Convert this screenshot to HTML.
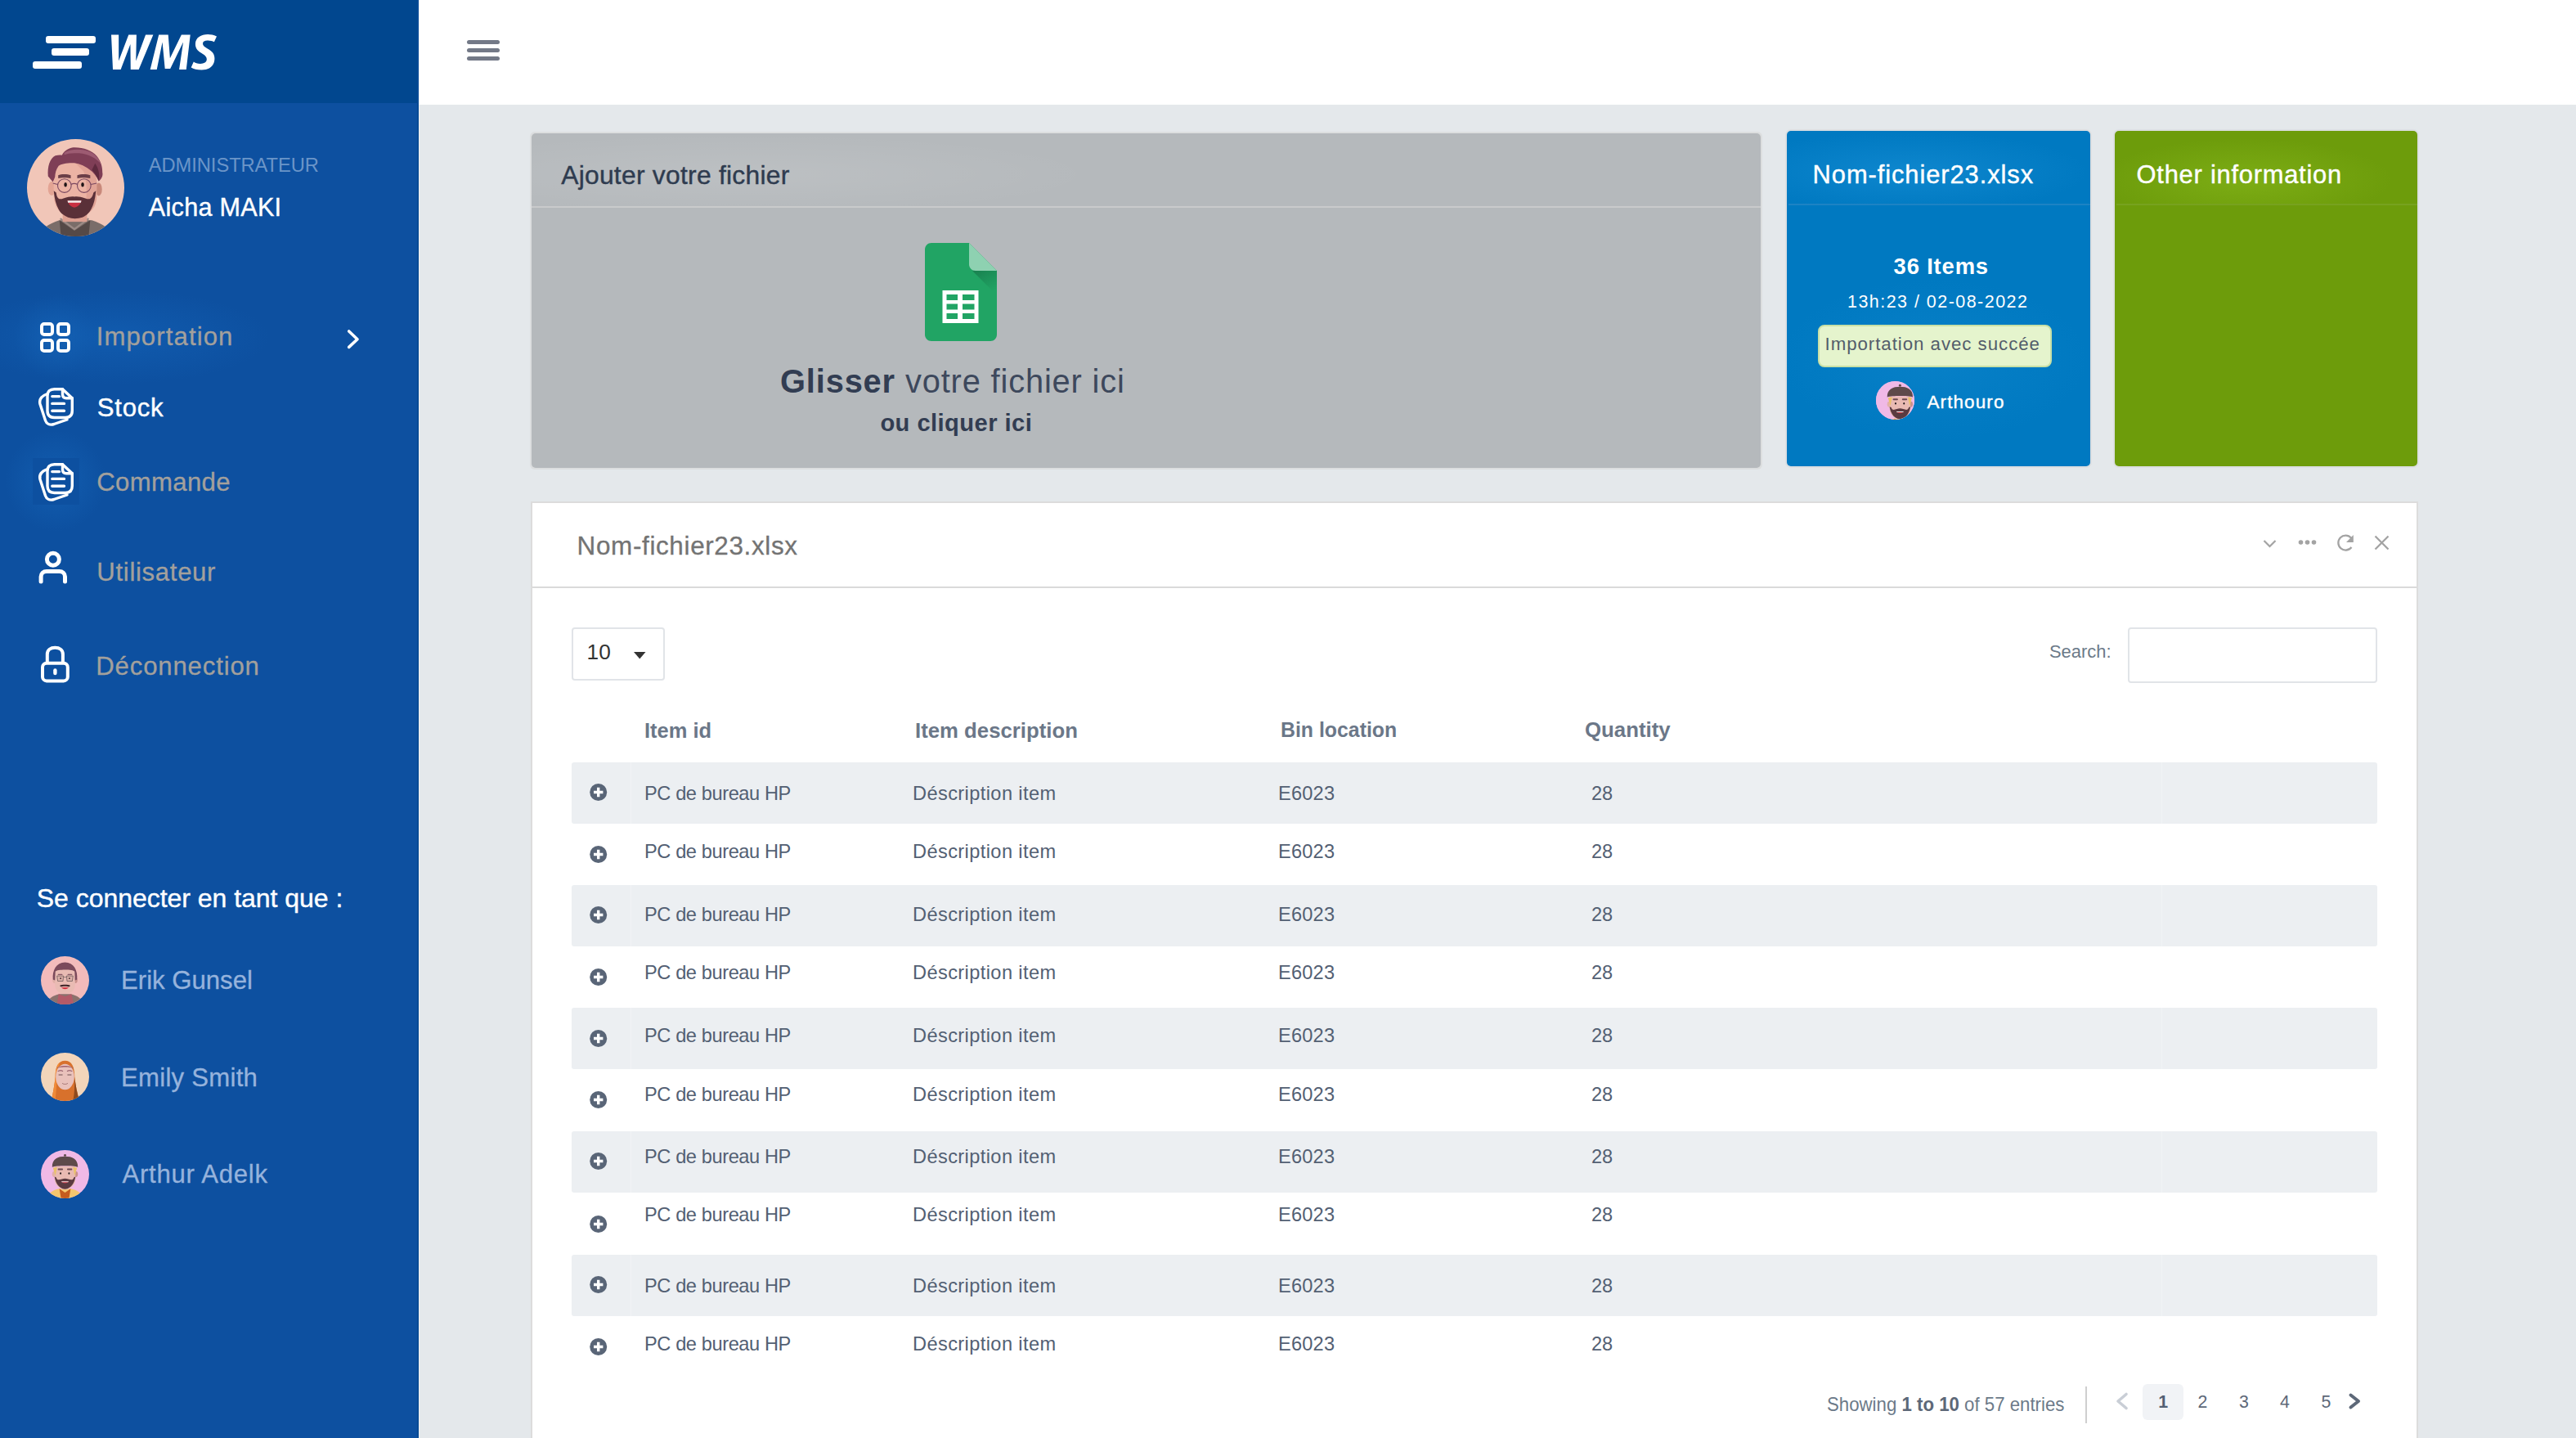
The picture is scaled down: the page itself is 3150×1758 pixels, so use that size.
<!DOCTYPE html>
<html><head><meta charset="utf-8">
<style>
*{margin:0;padding:0;box-sizing:border-box}
html,body{width:3150px;height:1758px;overflow:hidden}
body{position:relative;background:#e4e8eb;font-family:"Liberation Sans",sans-serif}
.a{position:absolute}
.t{position:absolute;line-height:1;white-space:nowrap}
#side{left:0;top:0;width:512px;height:1758px;background:#0d50a0}
#sidehead{left:0;top:0;width:512px;height:126px;background:#01478f}
#topbar{left:512px;top:0;width:2638px;height:128px;background:#fff}
.card{position:absolute;border-radius:5px}
</style></head>
<body>

<svg width="0" height="0" style="position:absolute">
<defs>
<clipPath id="cc"><circle cx="60" cy="60" r="60"/></clipPath>
<symbol id="av1" viewBox="0 0 120 120">
 <g clip-path="url(#cc)">
  <rect width="120" height="120" fill="#f1c6b8"/>
  <path d="M14 120 C18 110 26 105 40 100 L80 100 C94 105 102 110 106 120 Z" fill="#7a6d69"/>
  <path d="M40 100 L58.5 113 L78 100 L76 120 L42 120 Z" fill="#554947"/>
  <path d="M41 98 L58.5 111 L76 98" fill="none" stroke="#9c8b86" stroke-width="2.2"/>
  <rect x="44" y="86" width="30" height="16" fill="#dd9f91"/>
  <ellipse cx="30.5" cy="61" rx="4.6" ry="8.5" fill="#e3a494"/>
  <ellipse cx="88.5" cy="62" rx="4" ry="8" fill="#c9897b"/>
  <path d="M33 42 C33 32 44 28 58.5 28 C74 28 86 34 86 46 L86 70 C86 86 76 96 59 96 C43 96 33 86 33 70 Z" fill="#ecb3a4"/>
  <path d="M60 30 C72 30 84 38 86 50 L86 70 C86 84 78 92 66 95 C74 84 76 60 70 40 Z" fill="#d9968a" opacity=".55"/>
  <path d="M33 63.7 C34 76 37 86 43 92 C48 96 53 98 59 98 C66 98 71 96 75 92 C81 86 84 76 85 63.7 L82 66 C80 74 77 75 72 73 C66 71 62 70.5 58.5 71 C55 70.5 51 71 45 73 C40 75 37 74 36 66 Z" fill="#5a3038"/>
  <path d="M49.7 76 C52 83 57 84.5 58.5 84.5 C60 84.5 65 83 67.3 76 Z" fill="#c92f42"/>
  <path d="M50 76 L67 76 L66.5 78.3 L50.5 78.3 Z" fill="#f1eeee"/>
  <path d="M26 46 C25 34 28 24 35 20.5 C38 19.5 41 19.5 43 19.8 C47 13 53 10.4 59 10.4 C70 10.4 80 14 86 21 C91 27 93 34 93 41 C94 45 92 49 88.5 52 C86 46 82 41 77 37.5 C70 32 62 29.5 56 29.5 C48 29.5 42 31 39 33 C36 37 34.7 42 34.5 47 L32 53 Z" fill="#7f3e56"/>
  <path d="M46 17 C53 12 66 11.5 76 15 C84 18 89 24 91 31 C86 24 76 18.5 64 17.5 C56 17 50 17.5 46 19.5 Z" fill="#9d5b72"/>
  <path d="M84 30 C88 36 90 42 88.5 52 C86 46 84 42 80 38 Z" fill="#5e2a3e"/>
  <path d="M38.5 44.5 C42 43 50 43 54 44.5 L54 48.5 C50 47.5 42 47.5 38.5 48.5 Z" fill="#6b3f48"/>
  <path d="M62 44.5 C66 43 74 43 78 44.5 L78 48.5 C74 47.5 66 47.5 62 48.5 Z" fill="#6b3f48"/>
  <circle cx="46.2" cy="57.5" r="8.4" fill="none" stroke="#7a4860" stroke-width="1.1"/>
  <circle cx="70.4" cy="57.5" r="8.4" fill="none" stroke="#7a4860" stroke-width="1.1"/>
  <path d="M54.6 56 C56.5 54.5 60 54.5 62 56 M37.8 56 L32 54.5 M78.8 56 L86 54.5" fill="none" stroke="#7a4860" stroke-width="1.1"/>
  <ellipse cx="47.5" cy="56.2" rx="1.8" ry="2.8" fill="#1d1416"/>
  <ellipse cx="68.6" cy="56.2" rx="1.8" ry="2.8" fill="#1d1416"/>
 </g>
</symbol>
<symbol id="av2" viewBox="0 0 120 120">
 <g clip-path="url(#cc)">
  <rect width="120" height="120" fill="#f2bbbb"/>
  <path d="M14 120 C18 104 30 98 46 94 L74 94 C90 98 102 104 106 120 Z" fill="#8c716d"/>
  <path d="M44 94 L60 100 L76 94 L82 120 L40 120 Z" fill="#b35a68"/>
  <ellipse cx="34" cy="60" rx="5" ry="7" fill="#e2b0a8"/>
  <ellipse cx="86" cy="60" rx="5" ry="7" fill="#c9908a"/>
  <path d="M35 36 C35 26 46 24 60 24 C74 24 85 26 85 36 L85 70 C85 84 76 93 60 93 C44 93 35 84 35 70 Z" fill="#e9bbb3"/>
  <path d="M30 58 C28 34 38 16 60 15 C82 16 92 34 90 58 L85 60 L84 38 C80 32 40 32 36 38 L35 60 Z" fill="#7b4a5b"/>
  <path d="M40 49 L56 49 L55 62 L42 62 Z M64 49 L80 49 L78 62 L65 62 Z" fill="#c9a09a" fill-opacity=".45" stroke="#6e5a5a" stroke-width="1.6"/>
  <path d="M56 52 L64 52" stroke="#6e5a5a" stroke-width="1.4"/>
  <rect x="42" y="44" width="12" height="3" rx="1.5" fill="#8a5a66"/>
  <rect x="66" y="44" width="12" height="3" rx="1.5" fill="#8a5a66"/>
  <circle cx="49" cy="55" r="1.8" fill="#2a1a1c"/><circle cx="71" cy="55" r="1.8" fill="#2a1a1c"/>
  <path d="M47 73 C52 70 68 70 73 73 L71 76 C66 74 54 74 49 76 Z" fill="#3e2428"/>
  <path d="M51 78 C55 83 65 83 69 78 Z" fill="#d02a3a"/>
 </g>
</symbol>
<symbol id="av3" viewBox="0 0 120 120">
 <g clip-path="url(#cc)">
  <rect width="120" height="120" fill="#f3d5ba"/>
  <path d="M26 120 C30 100 34 80 36 60 C36 34 44 20 60 20 C76 20 84 34 84 60 C86 80 90 100 96 120 Z" fill="#d8712c"/>
  <path d="M26 120 C30 100 34 80 36 60 C36 40 40 28 48 24 C40 40 40 80 36 120 Z" fill="#f08a38"/>
  <path d="M84 60 C86 80 90 100 96 120 L80 120 C84 100 84 80 84 60 Z" fill="#8e4a1e"/>
  <ellipse cx="60" cy="60" rx="23" ry="32" fill="#e9c1bb"/>
  <path d="M38 40 C44 30 76 30 82 40 C76 34 44 34 38 40 Z" fill="#a0606a"/>
  <path d="M42 46 C46 44 52 44 55 46 M65 46 C68 44 74 44 78 46" stroke="#8a5060" stroke-width="2.2" fill="none"/>
  <path d="M44 55 L54 55 M66 55 L76 55" stroke="#4a3236" stroke-width="1.6"/>
  <path d="M53 76 C57 79 63 79 67 76" stroke="#8a5a5a" stroke-width="1.4" fill="none"/>
 </g>
</symbol>
<symbol id="av4" viewBox="0 0 120 120">
 <g clip-path="url(#cc)">
  <rect width="120" height="120" fill="#f0b9e6"/>
  <path d="M16 120 C20 104 32 99 46 96 L74 96 C88 99 100 104 104 120 Z" fill="#f5c66e"/>
  <path d="M46 96 L60 106 L74 96 L70 120 L50 120 Z" fill="#c65c1e"/>
  <rect x="50" y="86" width="20" height="12" fill="#e8b7ad"/>
  <ellipse cx="33" cy="60" rx="5" ry="7" fill="#e2b0a8"/>
  <ellipse cx="87" cy="60" rx="5" ry="7" fill="#c9908a"/>
  <path d="M34 40 L86 40 L86 70 C86 86 76 96 60 96 C44 96 34 86 34 70 Z" fill="#e9bab2"/>
  <path d="M30 44 L40 42 L36 64 Z M90 44 L80 42 L84 64 Z" fill="#eac26a"/>
  <path d="M34 66 C36 80 44 96 60 97 C76 96 84 80 86 66 L82 68 C80 76 74 74 68 72 C62 70 58 70 52 72 C46 74 40 76 38 68 Z" fill="#5b3a40"/>
  <path d="M51 78 C55 84 65 84 69 78 Z" fill="#c9323f"/>
  <path d="M51 78 L69 78 L68 80 L52 80 Z" fill="#eee"/>
  <path d="M28 42 C28 22 42 16 60 16 C78 16 92 22 92 42 C80 38 40 38 28 42 Z" fill="#5e4a4a"/>
  <circle cx="60" cy="13" r="3" fill="#5e4a4a"/>
  <rect x="42" y="46" width="13" height="4" rx="2" fill="#6e4a52"/>
  <rect x="65" y="46" width="13" height="4" rx="2" fill="#6e4a52"/>
  <ellipse cx="49" cy="58" rx="1.8" ry="2.6" fill="#1d1416"/>
  <ellipse cx="70" cy="58" rx="1.8" ry="2.6" fill="#1d1416"/>
 </g>
</symbol>
<symbol id="av5" viewBox="0 0 120 120">
 <g clip-path="url(#cc)"><rect width="120" height="120" fill="#f0b9e6"/><g transform="translate(0,-3) scale(1.25)">
  <rect width="120" height="120" fill="#f0b9e6"/>
  <path d="M16 120 C20 104 32 99 46 96 L74 96 C88 99 100 104 104 120 Z" fill="#f5c66e"/>
  <path d="M46 96 L60 106 L74 96 L70 120 L50 120 Z" fill="#c65c1e"/>
  <rect x="50" y="86" width="20" height="12" fill="#e8b7ad"/>
  <ellipse cx="33" cy="60" rx="5" ry="7" fill="#e2b0a8"/>
  <ellipse cx="87" cy="60" rx="5" ry="7" fill="#c9908a"/>
  <path d="M34 40 L86 40 L86 70 C86 86 76 96 60 96 C44 96 34 86 34 70 Z" fill="#e9bab2"/>
  <path d="M30 44 L40 42 L36 64 Z M90 44 L80 42 L84 64 Z" fill="#eac26a"/>
  <path d="M34 66 C36 80 44 96 60 97 C76 96 84 80 86 66 L82 68 C80 76 74 74 68 72 C62 70 58 70 52 72 C46 74 40 76 38 68 Z" fill="#5b3a40"/>
  <path d="M51 78 C55 84 65 84 69 78 Z" fill="#c9323f"/>
  <path d="M51 78 L69 78 L68 80 L52 80 Z" fill="#eee"/>
  <path d="M28 42 C28 22 42 16 60 16 C78 16 92 22 92 42 C80 38 40 38 28 42 Z" fill="#5e4a4a"/>
  <circle cx="60" cy="13" r="3" fill="#5e4a4a"/>
  <rect x="42" y="46" width="13" height="4" rx="2" fill="#6e4a52"/>
  <rect x="65" y="46" width="13" height="4" rx="2" fill="#6e4a52"/>
  <ellipse cx="49" cy="58" rx="1.8" ry="2.6" fill="#1d1416"/>
  <ellipse cx="70" cy="58" rx="1.8" ry="2.6" fill="#1d1416"/>
 </g></g>
</symbol>

<symbol id="docs" viewBox="0 0 64 60">
 <g fill="none" stroke="#fff" stroke-width="3.4" stroke-linecap="round" stroke-linejoin="round">
  <path d="M20 16.5 C13 19 9.5 23 11 29 L17.5 49 C19 53.5 23 55 28 53.5 L44 48"/>
  <path d="M28.5 10.7 L38.5 10.7 L50.3 21.7 L50.3 37 C50.3 43 47 45.5 42 45.5 L28.5 45.5 C23 45.5 20 42.5 20 37 L20 19 C20 13.5 23 10.7 28.5 10.7 Z"/>
  <path d="M38.5 10.7 L38.5 17 C38.5 20 40 21.7 43 21.7 L50.3 21.7"/>
  <path d="M25.8 19.6 L34.5 19.6 M25.8 28.4 L40.5 28.4 M25.8 37.3 L40.5 37.3"/>
 </g>
</symbol>
</defs></svg>
<div id="side" class="a"></div>
<div id="sidehead" class="a"></div>
<div class="a" style="left:510px;top:0;width:2px;height:1758px;background:#054a94"></div>
<div id="topbar" class="a"></div>
<div class="a" style="left:512px;top:128px;width:1px;height:1630px;background:#eef0f1"></div>

<!-- logo -->
<div class="a" style="left:56px;top:44px;width:61px;height:9px;border-radius:3px;background:#fff"></div>
<div class="a" style="left:63px;top:59px;width:46px;height:9px;border-radius:3px;background:#fff"></div>
<div class="a" style="left:40px;top:75px;width:60px;height:9px;border-radius:3px;background:#fff"></div>
<svg class="a" style="left:0;top:0" width="300" height="110" viewBox="0 0 300 110"><g fill="#fff">
<path d="M136.02 42.42 L145.16 42.42 L145.16 74.41 L157.27 42.42 L166.89 42.42 L166.27 74.41 L178.07 42.42 L187.39 42.42 L169.69 84.97 L159.75 84.97 L159.44 53.91 L147.64 84.97 L138.01 84.97 Z"/>
<path d="M183.66 84.97 L194.22 42.42 L205.71 42.42 L207.89 71.30 L221.86 42.42 L232.73 42.42 L227.76 84.97 L219.07 84.97 L224.04 51.43 L208.20 84.04 L201.68 84.04 L198.57 51.43 L191.74 84.97 Z"/>
<path d="M265.0 44.6 C261 42.8 258 42.1 254 42.1 C246 42.1 238.9 46 238.9 54 C238.9 60 243 63 248 66 C251.5 68.2 252.8 70 252.8 72.6 C252.8 76 249.5 77.9 245 77.9 C241.5 77.9 238.5 76.8 236.8 75.4 L233.7 82.5 C236.5 84.2 241 85.6 246.5 85.6 C256 85.6 262.4 80.5 262.4 71.5 C262.4 65.5 259 62.3 253 58.9 C249.5 56.9 248 55.6 248 53.2 C248 50.8 250.2 49.5 253.7 49.5 C257 49.5 259.8 50.4 261.9 51.2 Z"/>
</g></svg>


<!-- profile -->
<svg class="a" style="left:33px;top:170px" width="119" height="119"><use href="#av1"/></svg>
<div class="t" id="admin" style="left:181.80px;top:190.98px;font-size:23.68px;letter-spacing:-0.042px;color:#6b95c8">ADMINISTRATEUR</div>
<div class="t" id="aicha" style="left:181.80px;top:238.33px;font-size:30.56px;letter-spacing:0.300px;color:#fff;-webkit-text-stroke:0.4px currentColor">Aicha MAKI</div>

<!-- menu glow -->
<div class="a" style="left:0;top:340px;width:330px;height:145px;background:radial-gradient(ellipse 190px 58px at 140px 72px,rgba(25,115,205,.32),rgba(25,115,205,0))"></div>
<div class="a" style="left:0;top:352px;width:140px;height:120px;background:radial-gradient(circle at 67px 60px,rgba(30,120,205,.25),rgba(30,120,205,0) 50px)"></div>
<div class="a" style="left:0;top:518px;width:140px;height:140px;background:radial-gradient(circle at 68px 70px,rgba(25,110,195,.45),rgba(25,110,195,0) 62px)"></div>
<div class="a" style="left:40px;top:560px;width:57px;height:57px;background:#0d50a0"></div>

<!-- importation -->
<div class="a" style="left:49px;top:394px;width:17px;height:17px;border:4px solid #fff;border-radius:5px"></div>
<div class="a" style="left:69px;top:394px;width:17px;height:17px;border:4px solid #fff;border-radius:5px"></div>
<div class="a" style="left:49px;top:414px;width:17px;height:17px;border:4px solid #fff;border-radius:5px"></div>
<div class="a" style="left:69px;top:414px;width:17px;height:17px;border:4px solid #fff;border-radius:5px"></div>
<div class="t" id="m_imp" style="left:117.70px;top:396.43px;font-size:31.13px;letter-spacing:1.100px;color:#a3a09c;-webkit-text-stroke:0.3px currentColor">Importation</div>
<svg class="a" style="left:420px;top:398px" width="24" height="34"><path d="M6.7 7 L17 16.7 L6.7 26.4" fill="none" stroke="#fff" stroke-width="3.6" stroke-linecap="round" stroke-linejoin="round"/></svg>

<!-- stock -->
<svg class="a" style="left:38px;top:465px" width="64" height="60"><use href="#docs"/></svg>
<div class="t" id="m_stock" style="left:118.80px;top:483.43px;font-size:31.13px;letter-spacing:0.750px;color:#fff;-webkit-text-stroke:0.4px currentColor">Stock</div>
<!-- commande -->
<svg class="a" style="left:38px;top:557px" width="64" height="60"><use href="#docs"/></svg>
<div class="t" id="m_cmd" style="left:118.30px;top:573.53px;font-size:31.13px;letter-spacing:0.328px;color:#a3a09c;-webkit-text-stroke:0.3px currentColor">Commande</div>
<!-- utilisateur -->
<svg class="a" style="left:40px;top:665px" width="60" height="60">
 <g fill="none" stroke="#fff" stroke-width="5" stroke-linecap="round">
  <circle cx="24.9" cy="18.8" r="7.5"/>
  <path d="M10.1 45.9 L10.1 40 C10.1 36 13 33.5 17 33.5 L32.5 33.5 C36.5 33.5 39.5 36 39.5 40 L39.5 45.9"/>
 </g>
</svg>
<div class="t" id="m_user" style="left:118.30px;top:684.13px;font-size:31.13px;color:#a3a09c;letter-spacing:0.680px;-webkit-text-stroke:0.3px currentColor">Utilisateur</div>
<!-- deconnection -->
<svg class="a" style="left:40px;top:780px" width="60" height="60">
 <g fill="none" stroke="#fff" stroke-width="4">
  <path d="M17.8 30 L17.8 20 C17.8 14.5 22 11.8 27.3 11.8 C32.6 11.8 36.9 14.5 36.9 20 L36.9 30"/>
  <rect x="12" y="30.8" width="30.8" height="21.6" rx="5"/>
 </g>
 <rect x="25.2" y="37.3" width="4.4" height="8" rx="2.2" fill="#fff"/>
</svg>
<div class="t" id="m_dec" style="left:117.30px;top:799.03px;font-size:31.13px;color:#a3a09c;letter-spacing:0.837px;-webkit-text-stroke:0.3px currentColor">Déconnection</div>

<div class="t" id="seco" style="left:44.80px;top:1082.30px;font-size:32px;color:#fff;letter-spacing:-0.032px;-webkit-text-stroke:0.4px currentColor">Se connecter en tant que :</div>
<svg class="a" style="left:50px;top:1169px" width="59" height="59"><use href="#av2"/></svg>
<div class="t" id="u1" style="left:148.00px;top:1183.03px;font-size:31.13px;letter-spacing:0.000px;color:#96b3dc;-webkit-text-stroke:0.3px currentColor">Erik Gunsel</div>
<svg class="a" style="left:50px;top:1287px" width="59" height="59"><use href="#av3"/></svg>
<div class="t" id="u2" style="left:148.00px;top:1301.53px;font-size:31.13px;letter-spacing:0.260px;color:#96b3dc;-webkit-text-stroke:0.3px currentColor">Emily Smith</div>
<svg class="a" style="left:50px;top:1406px" width="59" height="59"><use href="#av4"/></svg>
<div class="t" id="u3" style="left:149.50px;top:1420.43px;font-size:31.13px;color:#96b3dc;letter-spacing:0.728px;-webkit-text-stroke:0.3px currentColor">Arthur Adelk</div>


<!-- upload card -->
<div class="a" style="left:648px;top:161px;width:1507px;height:413px;border-radius:6px;background:#dcdedf"></div>
<div class="a" style="left:650px;top:163px;width:1503px;height:409px;border-radius:5px;background:#b5b9bc;overflow:hidden">
  <div class="a" style="left:0;top:0;width:700px;height:90px;background:radial-gradient(ellipse at 260px 50px,rgba(255,255,255,.10),rgba(255,255,255,0) 70%)"></div>
</div>
<div class="a" style="left:650px;top:252px;width:1503px;height:2px;background:#c9cacb"></div>
<div class="t" id="ajout" style="left:686.20px;top:199.34px;font-size:31.80px;letter-spacing:0.260px;color:#2e3b4f;-webkit-text-stroke:0.4px currentColor">Ajouter votre fichier</div>
<svg class="a" style="left:1131px;top:297px" width="88" height="120" viewBox="0 0 88 120">
  <path d="M8 0 L54 0 L88 34 L88 112 C88 116.5 84.5 120 80 120 L8 120 C3.5 120 0 116.5 0 112 L0 8 C0 3.5 3.5 0 8 0 Z" fill="#21a464"/>
  <path d="M54 0 L88 34 L62 34 C57.5 34 54 30.5 54 26 Z" fill="#8ed1b1"/>
  <defs><linearGradient id="fg" x1="0" y1="0" x2="0.6" y2="1"><stop offset="0" stop-color="#177a4b" stop-opacity=".85"/><stop offset="1" stop-color="#177a4b" stop-opacity="0"/></linearGradient></defs><path d="M58 34 L88 34 L88 64 Z" fill="url(#fg)"/>
  <rect x="21.5" y="58" width="44" height="40" fill="#fff"/>
  <rect x="26.5" y="63" width="13.5" height="7" fill="#21a464"/>
  <rect x="46" y="63" width="14.5" height="7" fill="#21a464"/>
  <rect x="26.5" y="74.5" width="13.5" height="7" fill="#21a464"/>
  <rect x="46" y="74.5" width="14.5" height="7" fill="#21a464"/>
  <rect x="26.5" y="86" width="13.5" height="7" fill="#21a464"/>
  <rect x="46" y="86" width="14.5" height="7" fill="#21a464"/>
</svg>
<div class="t" id="gliss" style="left:954.00px;top:447.30px;font-size:39.82px;color:#323d52;letter-spacing:0.850px"><b>Glisser</b><span style="color:#3d485c"> votre fichier ici</span></div>
<div class="t" id="ouclic" style="left:1076.40px;top:503.22px;font-size:29.13px;letter-spacing:0.442px;font-weight:bold;color:#323d52">ou cliquer ici</div>

<!-- blue card -->
<div class="a" style="left:2183px;top:158px;width:375px;height:414px;border-radius:7px;background:#dcdfe2"></div>
<div class="a" style="left:2185px;top:160px;width:371px;height:410px;border-radius:5px;background:#0079c1;overflow:hidden">
  <div class="a" style="left:0;top:0;width:371px;height:90px;background:radial-gradient(ellipse at 150px 50px,rgba(40,160,230,.35),rgba(40,160,230,0) 70%)"></div>
  <div class="a" style="left:0;top:180px;width:371px;height:200px;background:radial-gradient(ellipse at 180px 100px,rgba(30,150,220,.25),rgba(30,150,220,0) 70%)"></div>
</div>
<div class="a" style="left:2187px;top:249px;width:369px;height:2px;background:#1d83c4"></div>
<div class="t" id="bc_title" style="left:2216.60px;top:198.89px;font-size:30.85px;letter-spacing:0.932px;color:#fff;-webkit-text-stroke:0.4px currentColor">Nom-fichier23.xlsx</div>
<div class="t" id="bc_items" style="left:2315.60px;top:311.8px;font-size:27.41px;font-weight:bold;color:#fff;letter-spacing:0.829px">36 Items</div>
<div class="t" id="bc_date" style="left:2259.00px;top:359.28px;font-size:21.49px;letter-spacing:1.467px;color:#fff">13h:23 / 02-08-2022</div>
<div class="a" style="left:2223px;top:397px;width:286px;height:52px;border-radius:8px;background:#e5f4cd;border:2px solid #c8e0a6"></div>
<div class="t" id="bc_badge" style="left:2231.5px;top:410.33px;font-size:22.28px;letter-spacing:0.96px;color:#535d6b">Importation avec succée</div>
<svg class="a" style="left:2294px;top:466px" width="47" height="47"><use href="#av5"/></svg>
<div class="t" id="bc_user" style="left:2356.50px;top:480.51px;font-size:22.45px;letter-spacing:1.114px;color:#fff;-webkit-text-stroke:0.4px currentColor">Arthouro</div>

<!-- green card -->
<div class="a" style="left:2584px;top:158px;width:374px;height:414px;border-radius:7px;background:#dcdfe2"></div>
<div class="a" style="left:2586px;top:160px;width:370px;height:410px;border-radius:5px;background:#6d9c0b;overflow:hidden">
  <div class="a" style="left:0;top:0;width:370px;height:90px;background:radial-gradient(ellipse at 160px 60px,rgba(140,190,30,.5),rgba(140,190,30,0) 60%)"></div>
</div>
<div class="a" style="left:2588px;top:249px;width:368px;height:2px;background:#77a21f"></div>
<div class="t" id="gc_title" style="left:2612.60px;top:198.89px;font-size:30.85px;letter-spacing:0.763px;color:#fff;-webkit-text-stroke:0.4px currentColor">Other information</div>

<!-- table card -->
<div class="a" style="left:649px;top:613px;width:2308px;height:1200px;background:#fff;border:2px solid #dcdcdc"></div>
<div class="a" style="left:651px;top:717px;width:2304px;height:2px;background:#dadada"></div>
<div class="t" id="tc_title" style="left:705.60px;top:651.64px;font-size:31.42px;color:#737373;letter-spacing:0.658px;-webkit-text-stroke:0.3px currentColor">Nom-fichier23.xlsx</div>


<!-- card header icons -->
<svg class="a" style="left:2760px;top:645px" width="170" height="40" viewBox="2760 645 170 40">
  <path d="M2768.5 661 L2775.5 668 L2782.5 661" fill="none" stroke="#a3a3a3" stroke-width="2.2"/>
  <circle cx="2813.5" cy="663" r="2.8" fill="#a3a3a3"/><circle cx="2821.5" cy="663" r="2.8" fill="#a3a3a3"/><circle cx="2829.5" cy="663" r="2.8" fill="#a3a3a3"/>
  <path d="M2875.5 669 A9 9 0 1 1 2875 657.5" fill="none" stroke="#a3a3a3" stroke-width="2.3"/>
  <path d="M2877.8 654 L2877.8 663 L2869 663 Z" fill="#a3a3a3"/>
  <path d="M2904.5 655.5 L2920.5 671.5 M2920.5 655.5 L2904.5 671.5" stroke="#a3a3a3" stroke-width="2.3"/>
</svg>

<!-- length select -->
<div class="a" style="left:699px;top:767px;width:114px;height:65px;border:2px solid #e1e4e8;border-radius:4px;background:#fff"></div>
<div class="t" id="len10" style="left:717.40px;top:783.70px;font-size:26.26px;color:#333;letter-spacing:0.2px">10</div>
<svg class="a" style="left:775px;top:797px" width="15" height="9"><path d="M0 0 L14.5 0 L7.25 8.5 Z" fill="#333"/></svg>

<!-- search -->
<div class="t" id="search" style="left:2506.40px;top:784.97px;font-size:22.73px;color:#6c7a89;transform-origin:0 0;transform:scaleX(0.9648)">Search:</div>
<div class="a" style="left:2602px;top:767px;width:305px;height:68px;border:2px solid #e1e4e8;border-radius:4px;background:#fff"></div>

<!-- header -->
<div class="t" id="h1" style="left:788.40px;top:879.90px;font-size:26.26px;font-weight:bold;color:#6b7788;transform-origin:0 0;transform:scaleX(0.9697)">Item id</div>
<div class="t" id="h2" style="left:1118.60px;top:879.90px;font-size:26.26px;font-weight:bold;color:#6b7788;transform-origin:0 0;transform:scaleX(0.9808)">Item description</div>
<div class="t" id="h3" style="left:1565.80px;top:879.30px;font-size:26.26px;font-weight:bold;color:#6b7788;transform-origin:0 0;transform:scaleX(0.9467)">Bin location</div>
<div class="t" id="h4" style="left:1938.20px;top:879.30px;font-size:26.26px;font-weight:bold;color:#6b7788;transform-origin:0 0;transform:scaleX(0.9821)">Quantity</div>
<div class="a" style="left:699px;top:931.5px;width:2208px;height:75px;border-radius:3px;background:#eceff2"></div>
<div class="a" style="left:699px;top:1082.2px;width:2208px;height:75px;border-radius:3px;background:#eceff2"></div>
<div class="a" style="left:699px;top:1232.3px;width:2208px;height:75px;border-radius:3px;background:#eceff2"></div>
<div class="a" style="left:699px;top:1382.7px;width:2208px;height:75px;border-radius:3px;background:#eceff2"></div>
<div class="a" style="left:699px;top:1534.0px;width:2208px;height:75px;border-radius:3px;background:#eceff2"></div>
<div class="a" style="left:771px;top:931.5px;width:1px;height:75px;background:#f1f3f5"></div>
<div class="a" style="left:771px;top:1082.2px;width:1px;height:75px;background:#f1f3f5"></div>
<div class="a" style="left:771px;top:1232.3px;width:1px;height:75px;background:#f1f3f5"></div>
<div class="a" style="left:771px;top:1382.7px;width:1px;height:75px;background:#f1f3f5"></div>
<div class="a" style="left:771px;top:1534.0px;width:1px;height:75px;background:#f1f3f5"></div>
<div class="a" style="left:2643px;top:931.5px;width:1px;height:75px;background:#f1f3f5"></div>
<div class="a" style="left:2643px;top:1082.2px;width:1px;height:75px;background:#f1f3f5"></div>
<div class="a" style="left:2643px;top:1232.3px;width:1px;height:75px;background:#f1f3f5"></div>
<div class="a" style="left:2643px;top:1382.7px;width:1px;height:75px;background:#f1f3f5"></div>
<div class="a" style="left:2643px;top:1534.0px;width:1px;height:75px;background:#f1f3f5"></div>
<svg class="a" style="left:721px;top:958.4px" width="22" height="22" viewBox="0 0 22 22"><circle cx="10.7" cy="10.5" r="10.5" fill="#596577"/><path d="M5 10.5 H16.4 M10.7 4.8 V16.2" stroke="#fff" stroke-width="3.4"/></svg>
<div class="t" style="left:788px;top:958.5px;font-size:23.6px;color:#536073;letter-spacing:-0.4px">PC de bureau HP</div>
<div class="t" style="left:1116px;top:958.5px;font-size:23.6px;color:#536073;letter-spacing:0.4px">Déscription item</div>
<div class="t" style="left:1563px;top:958.5px;font-size:23.6px;color:#536073;letter-spacing:0.2px">E6023</div>
<div class="t" style="left:1946px;top:958.5px;font-size:23.6px;color:#536073">28</div>
<svg class="a" style="left:721px;top:1033.6px" width="22" height="22" viewBox="0 0 22 22"><circle cx="10.7" cy="10.5" r="10.5" fill="#596577"/><path d="M5 10.5 H16.4 M10.7 4.8 V16.2" stroke="#fff" stroke-width="3.4"/></svg>
<div class="t" style="left:788px;top:1030.3px;font-size:23.6px;color:#536073;letter-spacing:-0.4px">PC de bureau HP</div>
<div class="t" style="left:1116px;top:1030.3px;font-size:23.6px;color:#536073;letter-spacing:0.4px">Déscription item</div>
<div class="t" style="left:1563px;top:1030.3px;font-size:23.6px;color:#536073;letter-spacing:0.2px">E6023</div>
<div class="t" style="left:1946px;top:1030.3px;font-size:23.6px;color:#536073">28</div>
<svg class="a" style="left:721px;top:1108.0px" width="22" height="22" viewBox="0 0 22 22"><circle cx="10.7" cy="10.5" r="10.5" fill="#596577"/><path d="M5 10.5 H16.4 M10.7 4.8 V16.2" stroke="#fff" stroke-width="3.4"/></svg>
<div class="t" style="left:788px;top:1106.5px;font-size:23.6px;color:#536073;letter-spacing:-0.4px">PC de bureau HP</div>
<div class="t" style="left:1116px;top:1106.5px;font-size:23.6px;color:#536073;letter-spacing:0.4px">Déscription item</div>
<div class="t" style="left:1563px;top:1106.5px;font-size:23.6px;color:#536073;letter-spacing:0.2px">E6023</div>
<div class="t" style="left:1946px;top:1106.5px;font-size:23.6px;color:#536073">28</div>
<svg class="a" style="left:721px;top:1183.8px" width="22" height="22" viewBox="0 0 22 22"><circle cx="10.7" cy="10.5" r="10.5" fill="#596577"/><path d="M5 10.5 H16.4 M10.7 4.8 V16.2" stroke="#fff" stroke-width="3.4"/></svg>
<div class="t" style="left:788px;top:1178.3px;font-size:23.6px;color:#536073;letter-spacing:-0.4px">PC de bureau HP</div>
<div class="t" style="left:1116px;top:1178.3px;font-size:23.6px;color:#536073;letter-spacing:0.4px">Déscription item</div>
<div class="t" style="left:1563px;top:1178.3px;font-size:23.6px;color:#536073;letter-spacing:0.2px">E6023</div>
<div class="t" style="left:1946px;top:1178.3px;font-size:23.6px;color:#536073">28</div>
<svg class="a" style="left:721px;top:1259.3px" width="22" height="22" viewBox="0 0 22 22"><circle cx="10.7" cy="10.5" r="10.5" fill="#596577"/><path d="M5 10.5 H16.4 M10.7 4.8 V16.2" stroke="#fff" stroke-width="3.4"/></svg>
<div class="t" style="left:788px;top:1254.7px;font-size:23.6px;color:#536073;letter-spacing:-0.4px">PC de bureau HP</div>
<div class="t" style="left:1116px;top:1254.7px;font-size:23.6px;color:#536073;letter-spacing:0.4px">Déscription item</div>
<div class="t" style="left:1563px;top:1254.7px;font-size:23.6px;color:#536073;letter-spacing:0.2px">E6023</div>
<div class="t" style="left:1946px;top:1254.7px;font-size:23.6px;color:#536073">28</div>
<svg class="a" style="left:721px;top:1334.0px" width="22" height="22" viewBox="0 0 22 22"><circle cx="10.7" cy="10.5" r="10.5" fill="#596577"/><path d="M5 10.5 H16.4 M10.7 4.8 V16.2" stroke="#fff" stroke-width="3.4"/></svg>
<div class="t" style="left:788px;top:1326.5px;font-size:23.6px;color:#536073;letter-spacing:-0.4px">PC de bureau HP</div>
<div class="t" style="left:1116px;top:1326.5px;font-size:23.6px;color:#536073;letter-spacing:0.4px">Déscription item</div>
<div class="t" style="left:1563px;top:1326.5px;font-size:23.6px;color:#536073;letter-spacing:0.2px">E6023</div>
<div class="t" style="left:1946px;top:1326.5px;font-size:23.6px;color:#536073">28</div>
<svg class="a" style="left:721px;top:1408.9px" width="22" height="22" viewBox="0 0 22 22"><circle cx="10.7" cy="10.5" r="10.5" fill="#596577"/><path d="M5 10.5 H16.4 M10.7 4.8 V16.2" stroke="#fff" stroke-width="3.4"/></svg>
<div class="t" style="left:788px;top:1403.2px;font-size:23.6px;color:#536073;letter-spacing:-0.4px">PC de bureau HP</div>
<div class="t" style="left:1116px;top:1403.2px;font-size:23.6px;color:#536073;letter-spacing:0.4px">Déscription item</div>
<div class="t" style="left:1563px;top:1403.2px;font-size:23.6px;color:#536073;letter-spacing:0.2px">E6023</div>
<div class="t" style="left:1946px;top:1403.2px;font-size:23.6px;color:#536073">28</div>
<svg class="a" style="left:721px;top:1485.5px" width="22" height="22" viewBox="0 0 22 22"><circle cx="10.7" cy="10.5" r="10.5" fill="#596577"/><path d="M5 10.5 H16.4 M10.7 4.8 V16.2" stroke="#fff" stroke-width="3.4"/></svg>
<div class="t" style="left:788px;top:1474.3px;font-size:23.6px;color:#536073;letter-spacing:-0.4px">PC de bureau HP</div>
<div class="t" style="left:1116px;top:1474.3px;font-size:23.6px;color:#536073;letter-spacing:0.4px">Déscription item</div>
<div class="t" style="left:1563px;top:1474.3px;font-size:23.6px;color:#536073;letter-spacing:0.2px">E6023</div>
<div class="t" style="left:1946px;top:1474.3px;font-size:23.6px;color:#536073">28</div>
<svg class="a" style="left:721px;top:1560.3px" width="22" height="22" viewBox="0 0 22 22"><circle cx="10.7" cy="10.5" r="10.5" fill="#596577"/><path d="M5 10.5 H16.4 M10.7 4.8 V16.2" stroke="#fff" stroke-width="3.4"/></svg>
<div class="t" style="left:788px;top:1560.6px;font-size:23.6px;color:#536073;letter-spacing:-0.4px">PC de bureau HP</div>
<div class="t" style="left:1116px;top:1560.6px;font-size:23.6px;color:#536073;letter-spacing:0.4px">Déscription item</div>
<div class="t" style="left:1563px;top:1560.6px;font-size:23.6px;color:#536073;letter-spacing:0.2px">E6023</div>
<div class="t" style="left:1946px;top:1560.6px;font-size:23.6px;color:#536073">28</div>
<svg class="a" style="left:721px;top:1635.9px" width="22" height="22" viewBox="0 0 22 22"><circle cx="10.7" cy="10.5" r="10.5" fill="#596577"/><path d="M5 10.5 H16.4 M10.7 4.8 V16.2" stroke="#fff" stroke-width="3.4"/></svg>
<div class="t" style="left:788px;top:1631.6px;font-size:23.6px;color:#536073;letter-spacing:-0.4px">PC de bureau HP</div>
<div class="t" style="left:1116px;top:1631.6px;font-size:23.6px;color:#536073;letter-spacing:0.4px">Déscription item</div>
<div class="t" style="left:1563px;top:1631.6px;font-size:23.6px;color:#536073;letter-spacing:0.2px">E6023</div>
<div class="t" style="left:1946px;top:1631.6px;font-size:23.6px;color:#536073">28</div>

<!-- footer -->
<div class="t" id="showing" style="left:2233.60px;top:1705.38px;font-size:24.07px;color:#6c7a89;transform-origin:0 0;transform:scaleX(0.9238)">Showing <b style="color:#5d6878">1 to 10</b> of 57 entries</div>
<div class="a" style="left:2550px;top:1695px;width:2px;height:45px;background:#cfcfcf"></div>
<svg class="a" style="left:2580px;top:1695px" width="320" height="40" viewBox="2580 1695 320 40">
  <path d="M2600 1704.5 L2590 1713 L2600 1721.5" fill="none" stroke="#c9ced6" stroke-width="3.6" stroke-linejoin="round" stroke-linecap="round"/>
  <path d="M2874.5 1705.5 L2884 1713 L2874.5 1720.5" fill="none" stroke="#5d6878" stroke-width="4" stroke-linejoin="round" stroke-linecap="round"/>
</svg>
<div class="a" style="left:2620px;top:1692px;width:50px;height:44px;border-radius:6px;background:#f1f3f6"></div>
<div class="t" id="p1" style="left:2639.20px;top:1704.36px;font-size:21.30px;font-weight:bold;color:#536073;letter-spacing:-1.200px">1</div>
<div class="t" id="p2" style="left:2687.60px;top:1704.36px;font-size:21.30px;color:#5d6878;letter-spacing:4.800px">2</div>
<div class="t" id="p3" style="left:2738.00px;top:1704.36px;font-size:21.30px;color:#5d6878;letter-spacing:1.600px">3</div>
<div class="t" id="p4" style="left:2788.00px;top:1704.36px;font-size:21.30px;color:#5d6878;letter-spacing:1.000px">4</div>
<div class="t" id="p5" style="left:2838.60px;top:1704.36px;font-size:21.30px;color:#5d6878;letter-spacing:-0.200px">5</div>

<!-- hamburger -->
<div class="a" style="left:571px;top:49px;width:40px;height:5px;border-radius:3px;background:#737987"></div>
<div class="a" style="left:571px;top:59px;width:40px;height:5px;border-radius:3px;background:#737987"></div>
<div class="a" style="left:571px;top:69px;width:40px;height:5px;border-radius:3px;background:#737987"></div>

</body></html>
